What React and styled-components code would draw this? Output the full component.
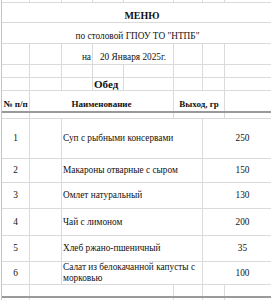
import React from "react";
import styled, { createGlobalStyle } from "styled-components";

const Global = createGlobalStyle`
  html, body { margin: 0; padding: 0; background: #fff; }
  body { font-family: "Liberation Serif", "Times New Roman", serif; color: #111; overflow: hidden; }
`;

const Sheet = styled.div`
  margin-left: 1px;
  width: 281px;
  height: 300px;
  border-left: 1px solid #c4c4c4;
  overflow: hidden;
`;

const Row = styled.div`
  display: grid;
  grid-template-columns: 28px 32px 31px 31px 50px 29px 22px 57px;
  height: ${(p) => p.$h}px;
  box-sizing: border-box;
  border-bottom: ${(p) => (p.$thick ? "2px solid #9a9a9a" : "1px solid #dadada")};
`;

const Cell = styled.div`
  grid-column: span ${(p) => p.$span || 1};
  box-sizing: border-box;
  border-right: ${(p) => (p.$noLine ? "none" : "1px solid #dadada")};
  display: flex;
  align-items: ${(p) => (p.$v === "bottom" ? "flex-end" : "center")};
  justify-content: ${(p) =>
    p.$align === "left" ? "flex-start" : p.$align === "right" ? "flex-end" : "center"};
  text-align: ${(p) => p.$align || "center"};
  padding: ${(p) => (p.$v === "bottom" ? "0 1px 1px 1px" : "0 1px")};
  padding-right: ${(p) => (p.$pr ? `${p.$pr}px` : "1px")};
  font-size: ${(p) => p.$size || 9.3}px;
  font-weight: ${(p) => (p.$bold ? 700 : 400)};
  line-height: 11px;
  white-space: ${(p) => (p.$wrap ? "normal" : "nowrap")};
  min-width: 0;
`;

const plain = (n) => Array.from({ length: n }, (_, i) => <Cell key={i} />);

const items = [
  { n: 1, name: "Суп с рыбными консервами", out: "250", h: 40 },
  { n: 2, name: "Макароны отварные с сыром", out: "150", h: 24 },
  { n: 3, name: "Омлет натуральный", out: "130", h: 26 },
  { n: 4, name: "Чай с лимоном", out: "200", h: 27 },
  { n: 5, name: "Хлеб ржано-пшеничный", out: "35", h: 26 },
  { n: 6, name: "Салат из белокачанной капусты с морковью", out: "100", h: 23 },
];

export default function App() {
  return (
    <>
      <Global />
      <Sheet>
        <Row $h={3}>{plain(8)}</Row>
        <Row $h={20}>
          <Cell $span={8} $noLine $v="bottom" $bold $size={10}>МЕНЮ</Cell>
        </Row>
        <Row $h={21}>
          <Cell $span={8} $noLine $v="bottom" $pr={10}>по столовой ГПОУ ТО "НТПБ"</Cell>
        </Row>
        <Row $h={21}>
          <Cell />
          <Cell />
          <Cell $v="bottom" $align="right">на</Cell>
          <Cell $span={2} $v="bottom">20 Января 2025г.</Cell>
          <Cell />
          <Cell />
          <Cell $noLine />
        </Row>
        <Row $h={13}>{plain(8)}</Row>
        <Row $h={13}>
          <Cell />
          <Cell />
          <Cell />
          <Cell $align="left" $bold $size={11}>Обед</Cell>
          <Cell />
          <Cell />
          <Cell />
          <Cell $noLine />
        </Row>
        <Row $h={22} $thick>
          <Cell $v="bottom" $bold $size={9}>№ п/п</Cell>
          <Cell $span={4} $v="bottom" $bold $size={9}>Наименование</Cell>
          <Cell $span={2} $v="bottom" $bold $size={9}>Выход, гр</Cell>
          <Cell $noLine />
        </Row>
        <Row $h={6}>
          <Cell />
          <Cell $span={4} />
          <Cell $span={2} />
          <Cell $noLine />
        </Row>
        {items.map((it) => (
          <Row key={it.n} $h={it.h}>
            <Cell>{it.n}</Cell>
            <Cell />
            <Cell $span={4} $align="left" $wrap>{it.name}</Cell>
            <Cell $span={2} $noLine>{it.out}</Cell>
          </Row>
        ))}
        <Row $h={13} $thick>
          <Cell />
          <Cell $span={4} />
          <Cell />
          <Cell />
          <Cell $noLine />
        </Row>
        <Row $h={10}>
          <Cell />
          <Cell $span={4} />
          <Cell />
          <Cell />
          <Cell $noLine />
        </Row>
      </Sheet>
    </>
  );
}
